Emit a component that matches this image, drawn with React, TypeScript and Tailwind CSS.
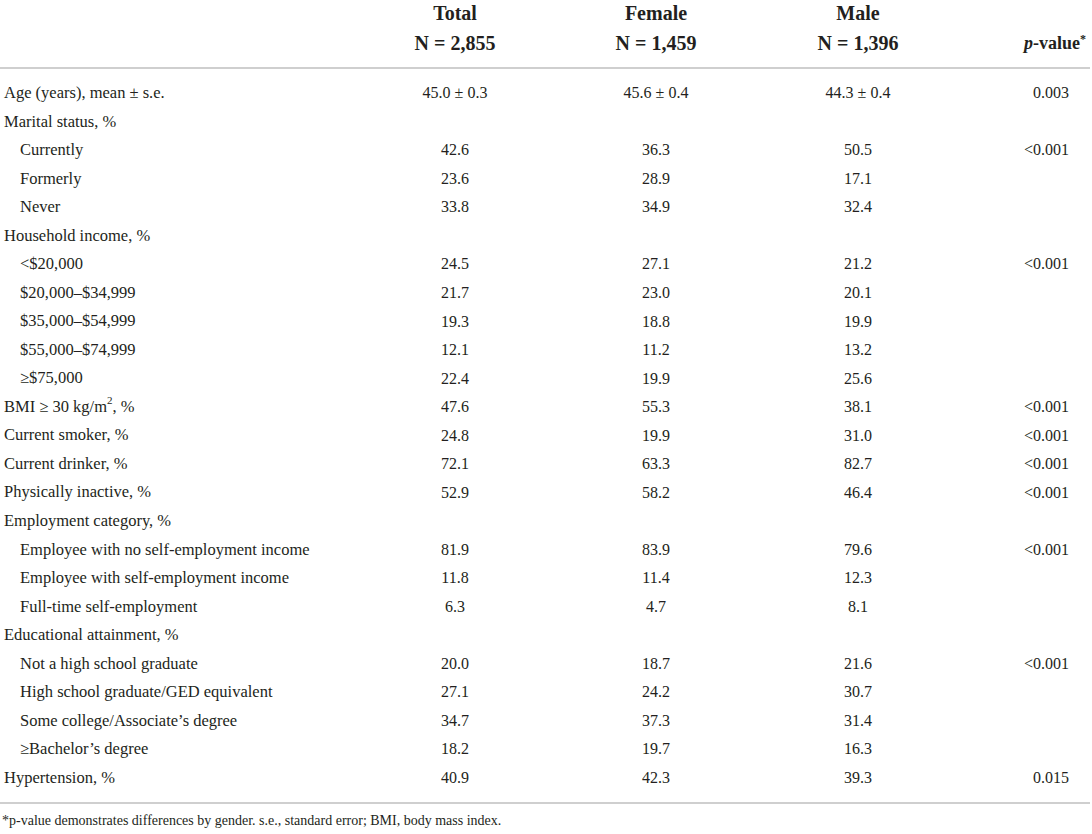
import React from "react";

type Row = { label: React.ReactNode; indent?: boolean; t?: string; f?: string; m?: string; p?: string };

const rows: Row[] = [
  { label: "Age (years), mean ± s.e.", t: "45.0 ± 0.3", f: "45.6 ± 0.4", m: "44.3 ± 0.4", p: "0.003" },
  { label: "Marital status, %" },
  { label: "Currently", indent: true, t: "42.6", f: "36.3", m: "50.5", p: "<0.001" },
  { label: "Formerly", indent: true, t: "23.6", f: "28.9", m: "17.1" },
  { label: "Never", indent: true, t: "33.8", f: "34.9", m: "32.4" },
  { label: "Household income, %" },
  { label: "<$20,000", indent: true, t: "24.5", f: "27.1", m: "21.2", p: "<0.001" },
  { label: "$20,000–$34,999", indent: true, t: "21.7", f: "23.0", m: "20.1" },
  { label: "$35,000–$54,999", indent: true, t: "19.3", f: "18.8", m: "19.9" },
  { label: "$55,000–$74,999", indent: true, t: "12.1", f: "11.2", m: "13.2" },
  { label: "≥$75,000", indent: true, t: "22.4", f: "19.9", m: "25.6" },
  {
    label: (
      <>
        BMI ≥ 30 kg/m<sup className="text-[11px] top-[-0.7em]">2</sup>, %
      </>
    ),
    t: "47.6",
    f: "55.3",
    m: "38.1",
    p: "<0.001",
  },
  { label: "Current smoker, %", t: "24.8", f: "19.9", m: "31.0", p: "<0.001" },
  { label: "Current drinker, %", t: "72.1", f: "63.3", m: "82.7", p: "<0.001" },
  { label: "Physically inactive, %", t: "52.9", f: "58.2", m: "46.4", p: "<0.001" },
  { label: "Employment category, %" },
  { label: "Employee with no self-employment income", indent: true, t: "81.9", f: "83.9", m: "79.6", p: "<0.001" },
  { label: "Employee with self-employment income", indent: true, t: "11.8", f: "11.4", m: "12.3" },
  { label: "Full-time self-employment", indent: true, t: "6.3", f: "4.7", m: "8.1" },
  { label: "Educational attainment, %" },
  { label: "Not a high school graduate", indent: true, t: "20.0", f: "18.7", m: "21.6", p: "<0.001" },
  { label: "High school graduate/GED equivalent", indent: true, t: "27.1", f: "24.2", m: "30.7" },
  { label: "Some college/Associate’s degree", indent: true, t: "34.7", f: "37.3", m: "31.4" },
  { label: "≥Bachelor’s degree", indent: true, t: "18.2", f: "19.7", m: "16.3" },
  { label: "Hypertension, %", t: "40.9", f: "42.3", m: "39.3", p: "0.015" },
];

const grid = "grid grid-cols-[360px_190px_212px_192px_136px]";

function Head({ a, b }: { a: string; b: string }) {
  return (
    <div className="text-center">
      <div className="h-[26px] leading-[26px]">{a}</div>
      <div className="h-[34px] leading-[34px]">{b}</div>
    </div>
  );
}

export default function App() {
  return (
    <div
      className="w-[1092px] h-[834px] bg-white text-[#231f20] overflow-hidden"
      style={{ fontFamily: '"Liberation Serif", "Times New Roman", serif' }}
    >
      <div className="w-[1090px]">
        <div className={`${grid} pb-[7px] font-bold text-[20px]`}>
          <div />
          <Head a="Total" b="N = 2,855" />
          <Head a="Female" b="N = 1,459" />
          <Head a="Male" b="N = 1,396" />
          <div className="text-right pr-[4px] flex flex-col justify-end">
            <div className="h-[34px] leading-[34px] text-[18px]">
              <i>p</i>-value<span className="text-[12px] relative top-[-6px]">*</span>
            </div>
          </div>
        </div>
        <div className="h-[2px] bg-[#cfcfcf]" />
        <div className="pt-[10px] pb-[10px]">
          {rows.map((r, i) => (
            <div key={i} className={`${grid} h-[28.54px] items-center leading-none text-[16px]`}>
              <div className={`${r.indent ? "pl-[20px]" : "pl-[4px]"} text-[16.5px]`}>{r.label}</div>
              <div className="text-center">{r.t}</div>
              <div className="text-center">{r.f}</div>
              <div className="text-center">{r.m}</div>
              <div className="text-right pr-[21px]">{r.p}</div>
            </div>
          ))}
        </div>
        <div className="h-[2px] bg-[#cfcfcf]" />
        <div className="pl-[2px] pt-[10px] text-[14px] leading-none">
          *p-value demonstrates differences by gender. s.e., standard error; BMI, body mass index.
        </div>
      </div>
    </div>
  );
}
